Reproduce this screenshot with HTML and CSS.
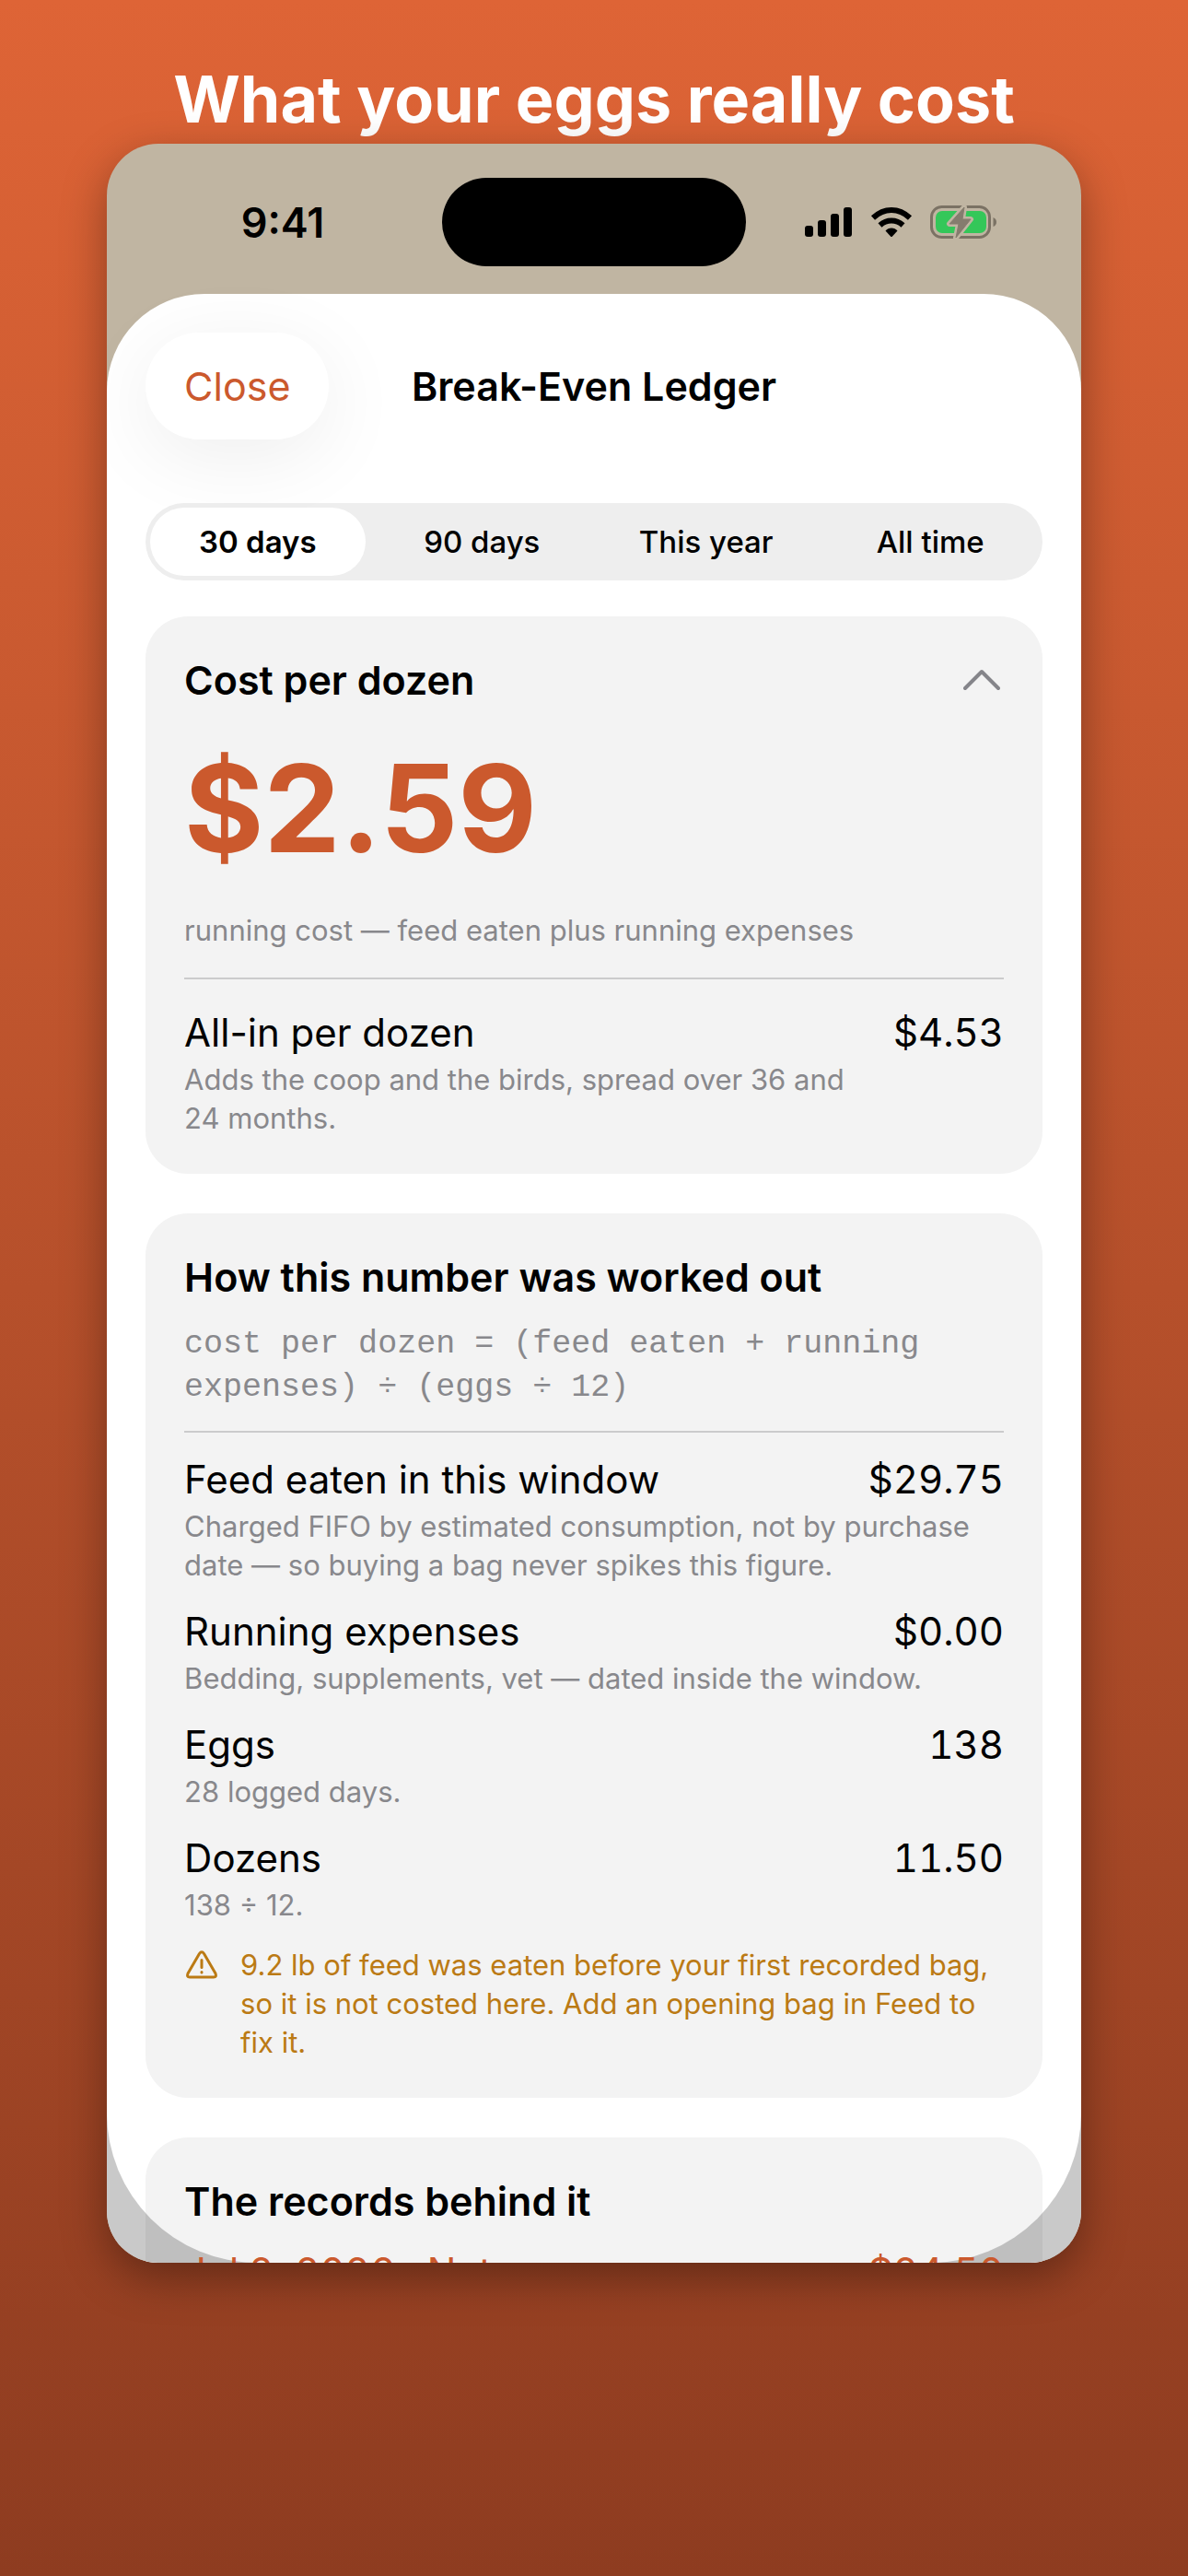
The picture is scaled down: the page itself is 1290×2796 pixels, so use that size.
FILE: index.html
```html
<!DOCTYPE html>
<html lang="en">
<head>
    <meta charset="UTF-8">
    <meta name="viewport" content="width=device-width, initial-scale=1.0">
    <title>Break-Even Ledger</title>
    <link rel="stylesheet" href="styles.css">
</head>
<body>
    <h1 class="headline">What your eggs really cost</h1>

    <main class="phone">
        <div class="status-bar">
            <span class="time">9:41</span>
            <div class="island"></div>
            <div class="status-icons">
                <svg width="52" height="34" viewBox="0 0 52 34">
                    <rect x="0" y="21" width="9" height="12" rx="3"/>
                    <rect x="14" y="15" width="9" height="18" rx="3"/>
                    <rect x="28" y="8" width="9" height="25" rx="3"/>
                    <rect x="42" y="1" width="9" height="32" rx="3"/>
                </svg>
                <svg width="46" height="34" viewBox="0 0 46 34">
                    <g fill="none" stroke="#000" stroke-width="6">
                        <path d="M3 12.500Q12 4 23 4T43 12.500"/>
                        <path d="M10.500 20.500Q16 15.500 23 15.500T35.500 20.500"/>
                    </g>
                    <path d="M16.500 26.500Q19 23.500 23 23.500T29.500 26.500L24 32.500Q23 33.500 22 32.500Z"/>
                </svg>
                <svg width="74" height="38" viewBox="0 0 74 38">
                    <rect x="1.500" y="2.500" width="63" height="33" rx="11" fill="none" stroke="#7b7264" stroke-width="3"/>
                    <rect x="6" y="7" width="55" height="24" rx="7" fill="#34c759"/>
                    <path d="M68.500 14Q72 15.500 72 19T68.500 24Z" fill="#7b7264"/>
                    <path d="M37 3L21 21H31L28 36L44 16H35Z" fill="#857c6e" stroke="#c0b5a2" stroke-width="6" stroke-linejoin="round"/>
                    <path d="M37 3L21 21H31L28 36L44 16H35Z" fill="#857c6e" stroke="#857c6e" stroke-linejoin="round"/>
                </svg>
            </div>
        </div>

        <div class="sheet">
            <header class="sheet-header">
                <button class="close-button" type="button">Close</button>
                <h2 class="sheet-title">Break-Even Ledger</h2>
            </header>

            <div class="segments">
                <button class="segment active" type="button">30 days</button>
                <button class="segment" type="button">90 days</button>
                <button class="segment" type="button">This year</button>
                <button class="segment" type="button">All time</button>
            </div>

            <section class="card cost-card">
                <div class="card-header">
                    <h3>Cost per dozen</h3>
                    <button class="collapse-button" type="button" aria-label="Collapse">
                        <svg width="40" height="24" viewBox="0 0 40 24" fill="none" stroke="#85858a" stroke-width="4" stroke-linecap="round" stroke-linejoin="round">
                            <path d="M2 21L20 3L38 21"/>
                        </svg>
                    </button>
                </div>
                <p class="big-price">$2.59</p>
                <p class="caption">running cost — feed eaten plus running expenses</p>
                <hr>
                <div class="line-top">
                    <div>
                        <p class="label">All-in per dozen</p>
                        <p class="caption">Adds the coop and the birds, spread over 36 and 24 months.</p>
                    </div>
                    <span class="amount">$4.53</span>
                </div>
            </section>

            <section class="card">
                <h3>How this number was worked out</h3>
                <p class="formula">cost per dozen = (feed eaten + running expenses) ÷ (eggs ÷ 12)</p>
                <hr>
                <div class="line">
                    <div class="line-top">
                        <span class="label">Feed eaten in this window</span>
                        <span class="amount">$29.75</span>
                    </div>
                    <p class="caption">Charged FIFO by estimated consumption, not by purchase date — so buying a bag never spikes this figure.</p>
                </div>
                <div class="line">
                    <div class="line-top">
                        <span class="label">Running expenses</span>
                        <span class="amount">$0.00</span>
                    </div>
                    <p class="caption">Bedding, supplements, vet — dated inside the window.</p>
                </div>
                <div class="line">
                    <div class="line-top">
                        <span class="label">Eggs</span>
                        <span class="amount">138</span>
                    </div>
                    <p class="caption">28 logged days.</p>
                </div>
                <div class="line">
                    <div class="line-top">
                        <span class="label">Dozens</span>
                        <span class="amount">11.50</span>
                    </div>
                    <p class="caption">138 ÷ 12.</p>
                </div>
                <div class="warning">
                    <svg width="38" height="32" viewBox="-2 0 38 32" fill="none" stroke="#bb7a14" stroke-width="3" stroke-linecap="round" stroke-linejoin="round">
                        <path d="M14.500 3.500Q17 0 19.500 3.500L32 25Q33.500 29 30 29H4Q0.500 29 2 25Z"/>
                        <path d="M17 10.500V18.500M17 23.500V24"/>
                    </svg>
                    <p class="caption">9.2 lb of feed was eaten before your first recorded bag, so it is not costed here. Add an opening bag in Feed to fix it.</p>
                </div>
            </section>

            <section class="card">
                <h3>The records behind it</h3>
                <a class="record" href="#">
                    <span>Jul 2, 2026 · Nutrena</span>
                    <span>$24.50</span>
                </a>
            </section>
        </div>
    </main>
</body>
</html>
```
FILE: styles.css
```css
:root {
    --rust: #cb592d;
    --sand: #c0b5a2;
    --card: #f3f3f3;
    --grey: #88888c;
    --amber: #bb7a14;
}

* {
    box-sizing: border-box;
}

body {
    margin: 0;
    min-height: 100vh;
    background: linear-gradient(#de6436, #8e3c20);
    font-family: Inter, "Liberation Sans", sans-serif;
    color: #000;
    display: flex;
    flex-direction: column;
    align-items: center;
}

h1, h2, h3, p {
    margin: 0;
}

button {
    font-family: inherit;
    border: none;
    padding: 0;
    cursor: pointer;
}

.headline {
    margin-top: 60px;
    font-size: 70px;
    line-height: 96px;
    font-weight: 700;
    color: #fff;
    text-align: center;
}

.phone {
    position: relative;
    width: 82%;
    aspect-ratio: 23 / 50;
    border-radius: 56px;
    background: var(--sand);
    overflow: hidden;
    box-shadow: 0 16px 48px rgba(0, 0, 0, 0.35);
}

.phone::after {
    content: "";
    position: absolute;
    inset: 0;
    border-radius: 0 0 163px 163px;
    box-shadow: 0 0 0 200px rgba(0, 0, 0, 0.21);
    pointer-events: none;
}

.status-bar {
    display: grid;
    grid-template-columns: 1fr 330px 1fr;
    align-items: center;
    height: 163px;
    padding-top: 7px;
}

.time {
    padding-left: 18px;
    font-size: 45px;
    font-weight: 600;
    text-align: center;
}

.island {
    height: 96px;
    border-radius: 48px;
    background: #000;
}

.status-icons {
    display: flex;
    align-items: center;
    justify-content: center;
    gap: 19px;
    padding-right: 26px;
}

.sheet {
    min-height: 100%;
    padding: 42px;
    border-radius: 106px 106px 0 0;
    background: #fff;
}

.sheet-header {
    display: grid;
    grid-template-columns: 1fr auto 1fr;
    align-items: center;
    margin-bottom: 69px;
}

.close-button {
    justify-self: start;
    height: 116px;
    padding: 0 42px;
    border-radius: 58px;
    background: #fff;
    color: var(--rust);
    font-size: 43px;
    box-shadow: 0 18px 90px rgba(0, 0, 0, 0.07);
}

.sheet-title {
    font-size: 43px;
    font-weight: 600;
}

.segments {
    display: grid;
    grid-template-columns: repeat(4, 1fr);
    height: 84px;
    margin-bottom: 39px;
    border-radius: 42px;
    background: #eee;
}

.segment {
    margin: 5px;
    border-radius: 37px;
    background: none;
    color: #000;
    font-size: 33px;
    font-weight: 500;
}

.segment.active {
    background: #fff;
    font-weight: 600;
}

.card {
    display: flex;
    flex-direction: column;
    gap: 23px;
    margin-bottom: 43px;
    padding: 42px 42px 39px;
    border-radius: 46px;
    background: var(--card);
}

.cost-card {
    gap: 30px;
}

.card h3 {
    font-size: 43px;
    line-height: 54px;
    font-weight: 600;
}

.card hr {
    width: 100%;
    height: 2px;
    margin: 0;
    border: none;
    background: #cbcbcc;
}

.card-header {
    display: flex;
    align-items: center;
    justify-content: space-between;
}

.collapse-button {
    display: flex;
    padding: 0 4px;
    background: none;
}

.big-price {
    font-size: 132px;
    line-height: 164px;
    font-weight: 700;
    color: var(--rust);
}

.label,
.amount {
    font-size: 42px;
    line-height: 56px;
}

.amount {
    font-variant-numeric: tabular-nums;
}

.line-top {
    display: flex;
    justify-content: space-between;
    gap: 32px;
}

.caption {
    font-size: 31px;
    line-height: 42px;
    color: var(--grey);
}

.label + .caption,
.line-top + .caption {
    margin-top: 2px;
}

.formula {
    font-family: "Liberation Mono", monospace;
    font-size: 35px;
    line-height: 47px;
    color: var(--grey);
}

.warning {
    display: flex;
    align-items: flex-start;
    gap: 23px;
}

.warning svg {
    flex: none;
    margin-top: 5px;
}

.warning .caption {
    color: var(--amber);
}

/* Sits above the dimmed corners */
.record {
    position: relative;
    z-index: 1;
    display: flex;
    justify-content: space-between;
    font-size: 42px;
    line-height: 54px;
    font-variant-numeric: tabular-nums;
    color: var(--rust);
    text-decoration: none;
}
```
